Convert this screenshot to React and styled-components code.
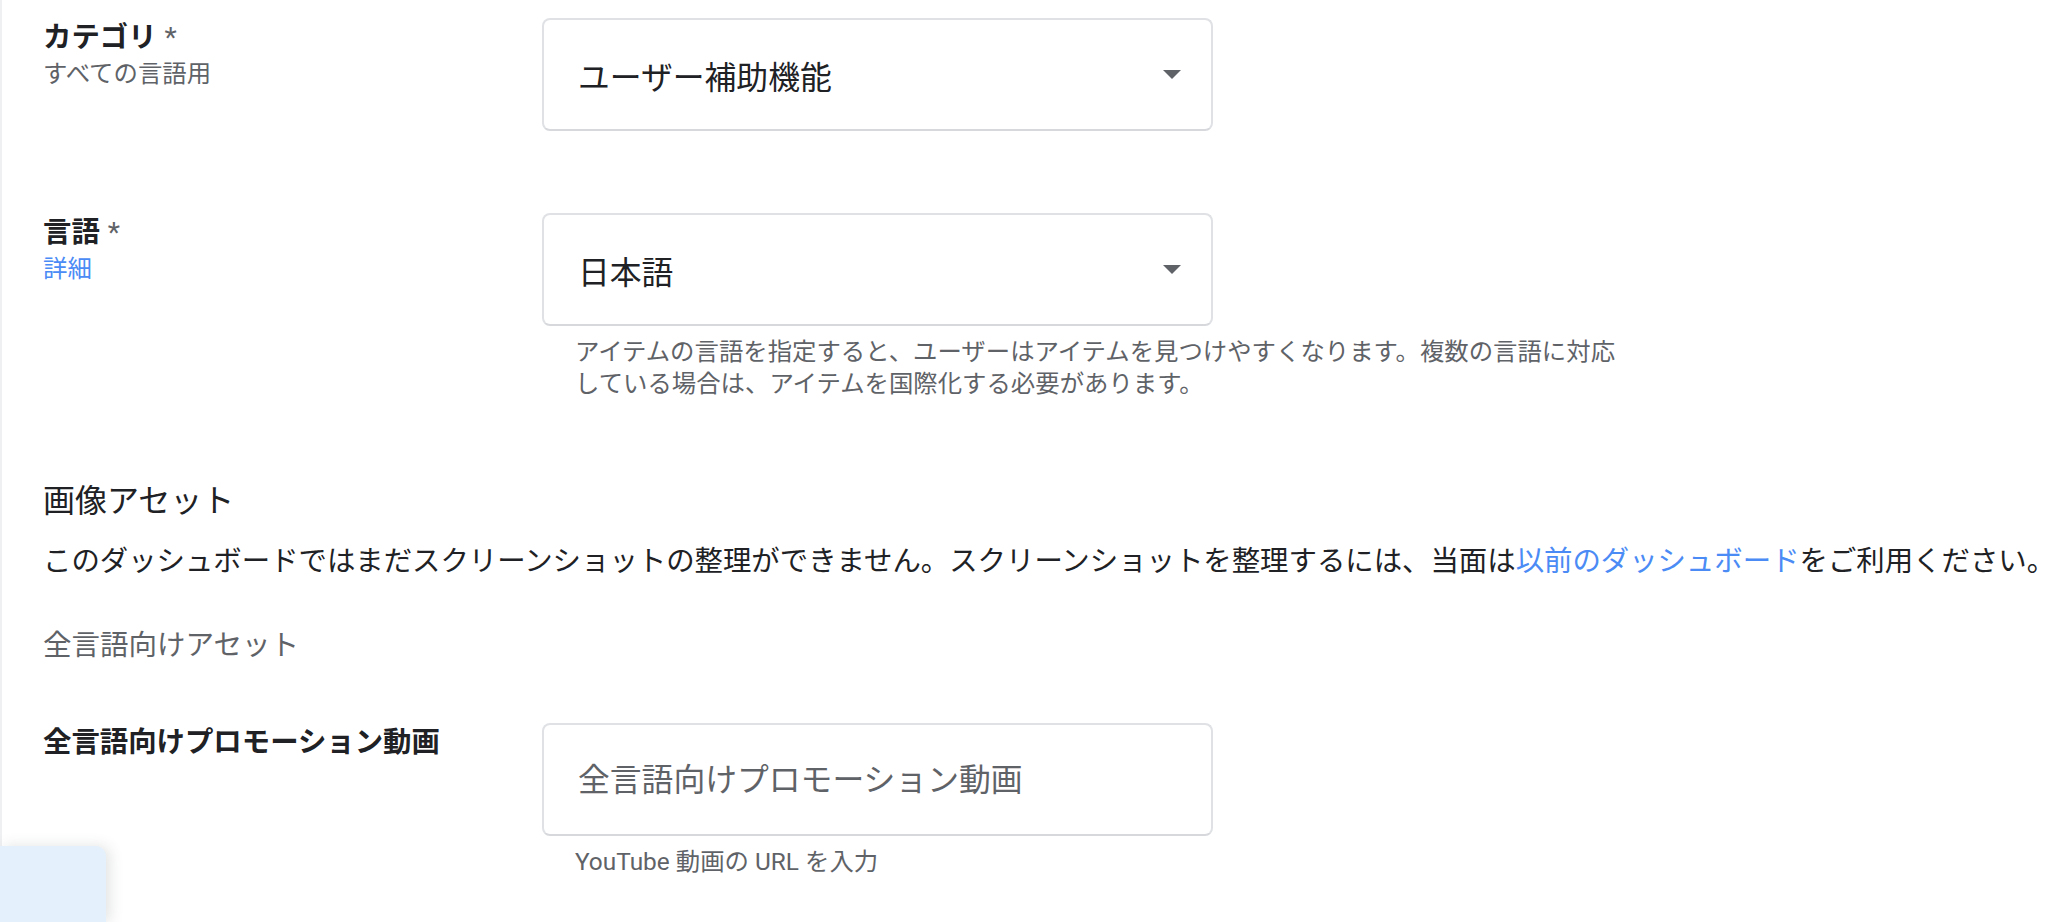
import React from 'react';
import styled, { createGlobalStyle } from 'styled-components';

const GlobalStyle = createGlobalStyle`
  html, body {
    margin: 0;
    padding: 0;
    background: #fff;
  }
  body {
    font-family: Roboto, 'Noto Sans CJK JP', sans-serif;
    color: #202124;
    -webkit-font-smoothing: antialiased;
  }
`;

const Page = styled.div`
  box-sizing: border-box;
  min-height: 100vh;
  border-left: 2px solid #eef0f2;
  padding: 18px 0 0 41px;
  overflow: hidden;
`;

const FieldRow = styled.div`
  display: grid;
  grid-template-columns: 499px 1fr;
  margin-top: ${(p) => p.gap || 0}px;
`;

const LabelCol = styled.div`
  display: flex;
  flex-direction: column;
`;

const Label = styled.div`
  font-size: 28.4px;
  line-height: 40px;
  font-weight: 700;
  color: #202124;
`;

const Required = styled.span`
  font-weight: 400;
  color: #5f6368;
  margin-left: 8px;
`;

const SubLabel = styled.div`
  font-size: 24.4px;
  line-height: 32px;
  color: ${(p) => (p.link ? '#4b8bf5' : '#5f6368')};
  cursor: ${(p) => (p.link ? 'pointer' : 'default')};
`;

const Field = styled.div`
  box-sizing: border-box;
  width: 671px;
  height: 113px;
  border: 2px solid #dfe1e5;
  border-bottom-color: #d6d8dc;
  border-radius: 8px;
  display: flex;
  align-items: center;
  justify-content: space-between;
  padding: 0 30px 0 34px;
  font-size: 31.8px;
  color: #202124;
`;

const Arrow = styled.span`
  width: 0;
  height: 0;
  border-left: 9px solid transparent;
  border-right: 9px solid transparent;
  border-top: 9px solid #5f6368;
`;

const TextInput = styled.input`
  border: none;
  outline: none;
  padding: 0;
  width: 100%;
  background: transparent;
  font-family: inherit;
  font-size: 31.8px;
  color: #202124;
  &::placeholder {
    color: #5f6368;
  }
`;

const Helper = styled.div`
  margin-top: 10px;
  padding-left: 33px;
  width: 1060px;
  font-size: 24.4px;
  line-height: 31.5px;
  color: #5f6368;
`;

const SectionTitle = styled.h2`
  margin: 82px 0 0;
  font-size: 32px;
  line-height: 40px;
  font-weight: 400;
  color: #202124;
`;

const Notice = styled.p`
  margin: 21px 0 0;
  font-size: 28.4px;
  line-height: 40px;
  white-space: nowrap;
  color: #202124;
`;

const Link = styled.a`
  color: #4b8bf5;
  text-decoration: none;
`;

const GroupTitle = styled.div`
  margin-top: 44px;
  font-size: 28.5px;
  line-height: 40px;
  color: #5f6368;
`;

const FeedbackTab = styled.div`
  position: fixed;
  left: 0;
  bottom: 0;
  width: 106px;
  height: 76px;
  background: #e4f1fc;
  border-top-right-radius: 10px;
  box-shadow: 4px 0 14px rgba(60, 64, 67, 0.15);
`;

export default function App() {
  return (
    <>
      <GlobalStyle />
      <Page>
        <FieldRow>
          <LabelCol>
            <Label>
              カテゴリ<Required>*</Required>
            </Label>
            <SubLabel>すべての言語用</SubLabel>
          </LabelCol>
          <div>
            <Field>
              <span>ユーザー補助機能</span>
              <Arrow />
            </Field>
          </div>
        </FieldRow>

        <FieldRow gap={82}>
          <LabelCol>
            <Label>
              言語<Required>*</Required>
            </Label>
            <SubLabel link>詳細</SubLabel>
          </LabelCol>
          <div>
            <Field>
              <span>日本語</span>
              <Arrow />
            </Field>
            <Helper>
              アイテムの言語を指定すると、ユーザーはアイテムを見つけやすくなります。複数の言語に対応している場合は、アイテムを国際化する必要があります。
            </Helper>
          </div>
        </FieldRow>

        <SectionTitle>画像アセット</SectionTitle>
        <Notice>
          このダッシュボードではまだスクリーンショットの整理ができません。スクリーンショットを整理するには、当面は
          <Link href="#">以前のダッシュボード</Link>をご利用ください。
        </Notice>
        <GroupTitle>全言語向けアセット</GroupTitle>

        <FieldRow gap={57}>
          <LabelCol>
            <Label>全言語向けプロモーション動画</Label>
          </LabelCol>
          <div>
            <Field>
              <TextInput placeholder="全言語向けプロモーション動画" />
            </Field>
            <Helper>YouTube 動画の URL を入力</Helper>
          </div>
        </FieldRow>
      </Page>
      <FeedbackTab />
    </>
  );
}
